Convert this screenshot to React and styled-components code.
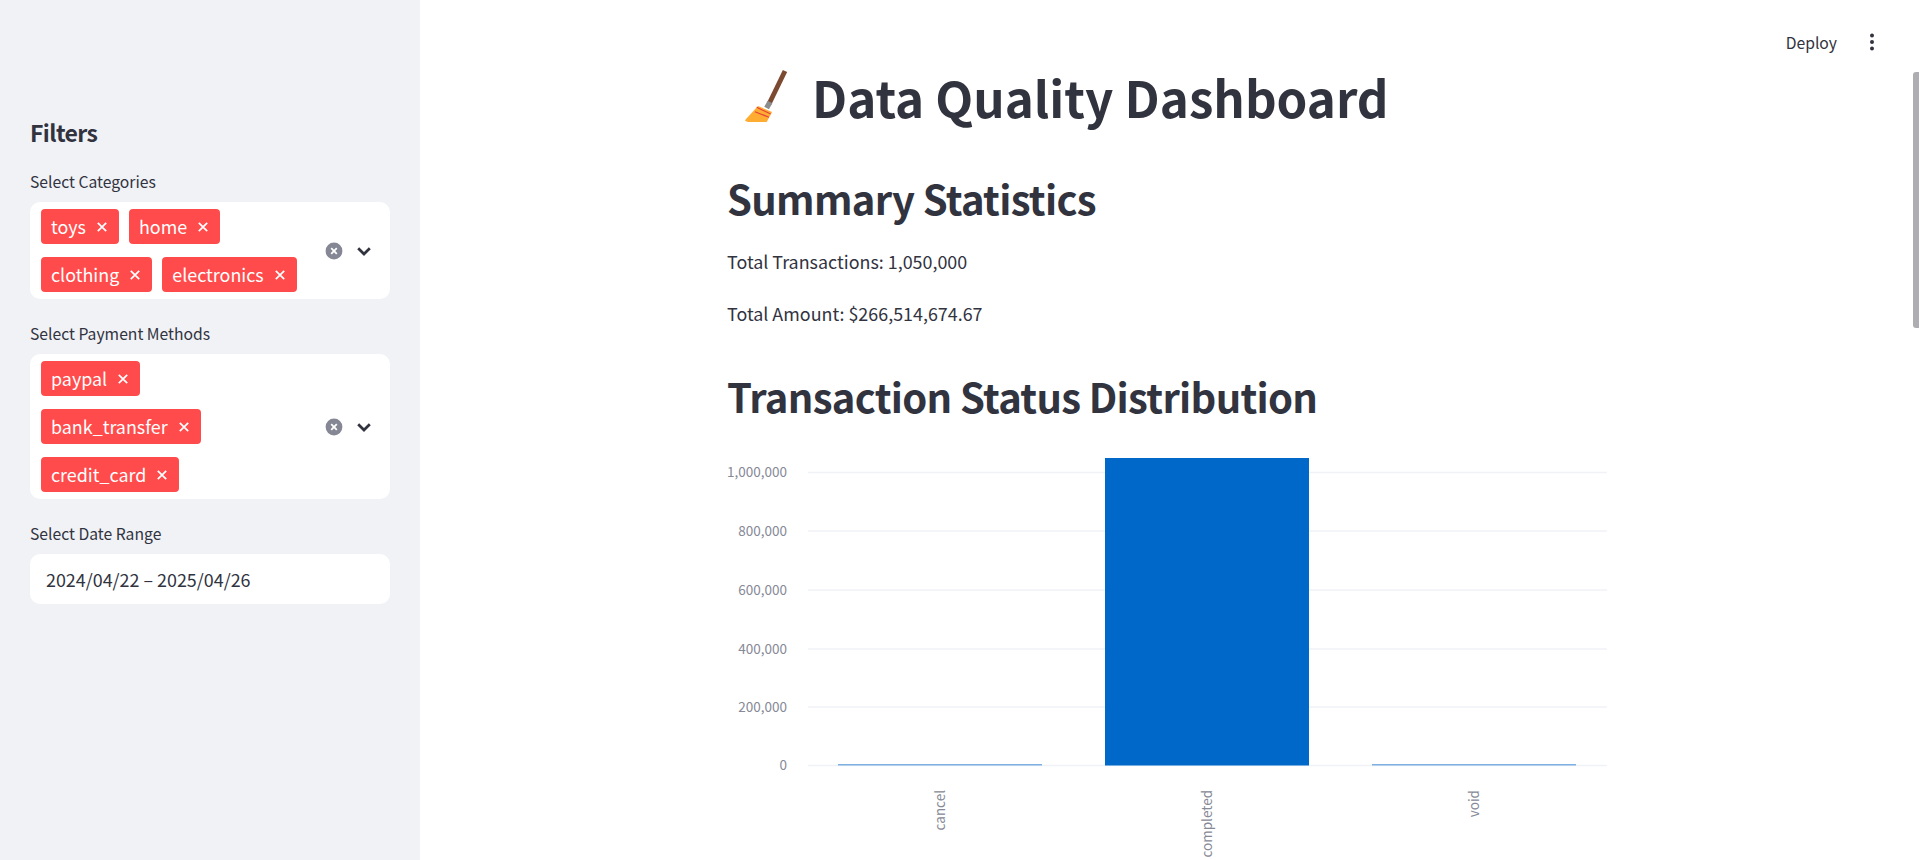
import React from "react";
import styled, { createGlobalStyle } from "styled-components";

const GlobalStyle = createGlobalStyle`
  html, body {
    margin: 0;
    padding: 0;
    height: 100%;
    overflow: hidden;
    background: #fff;
  }
  body {
    font-family: "Noto Sans CJK SC", "Noto Sans", sans-serif;
    color: #31333f;
  }
`;

const Page = styled.div`
  display: flex;
  height: 860px;
  overflow: hidden;
`;

const Sidebar = styled.aside`
  flex: 0 0 420px;
  box-sizing: border-box;
  background: #f0f2f6;
  padding: 116px 30px 0;
`;

const SidebarTitle = styled.h3`
  margin: 0 0 24px;
  font-size: 23px;
  letter-spacing: -0.6px;
  line-height: 32px;
  font-weight: 600;
`;

const Field = styled.div`
  margin-bottom: 25px;
`;

const FieldLabel = styled.label`
  display: block;
  font-size: 15.7px;
  line-height: 20px;
  margin-bottom: 10px;
`;

const MultiBox = styled.div`
  display: flex;
  align-items: center;
  background: #fff;
  border-radius: 10px;
  padding: 7px 10px 7px 11px;
`;

const TagList = styled.div`
  flex: 1;
  display: flex;
  flex-direction: column;
  row-gap: 13px;
`;

const TagRow = styled.div`
  display: flex;
  column-gap: 10px;
`;

const Tag = styled.span`
  display: inline-flex;
  align-items: center;
  box-sizing: border-box;
  height: 35px;
  padding: 0 12px 2px 10px;
  gap: 11px;
  border-radius: 4px;
  background: #ff4b4b;
  color: #fff;
  font-size: 17.9px;
  line-height: 20px;

  svg {
    margin-top: 2px;
  }
`;

const BoxControls = styled.div`
  display: flex;
  align-items: center;
  gap: 12px;
  padding-right: 7px;
`;

const DateBox = styled.div`
  height: 50px;
  box-sizing: border-box;
  padding: 0 16px;
  display: flex;
  align-items: center;
  background: #fff;
  border-radius: 10px;
  font-size: 17.9px;
`;

const Main = styled.main`
  position: relative;
  flex: 1;
  min-width: 0;
  display: flex;
  flex-direction: column;
`;

const Toolbar = styled.header`
  flex: 0 0 auto;
  box-sizing: border-box;
  height: 64px;
  padding: 20px 44px 0 0;
  display: flex;
  justify-content: flex-end;
  align-items: center;
  gap: 32px;
  font-size: 15.7px;
`;

const Content = styled.div`
  width: 885px;
  margin-left: 307px;
`;

const Title = styled.h1`
  margin: 0 0 40px;
  display: flex;
  align-items: center;
  gap: 19px;
  padding-left: 16px;
  font-size: 49.3px;
  line-height: 66px;
  font-weight: 700;
`;

const Heading = styled.h2`
  margin: ${(p) => (p.$spaced ? "40px" : "0")} 0 20px;
  font-size: 40px;
  letter-spacing: -0.7px;
  line-height: 56px;
  font-weight: 600;
`;

const Para = styled.p`
  margin: 0 0 22px;
  font-size: 17.9px;
  line-height: 30px;
`;

const ChartFrame = styled.svg`
  display: block;
`;

const AxisText = styled.text`
  font-size: 13.5px;
  fill: #868996;
`;

const Scrollbar = styled.div`
  position: absolute;
  top: 72px;
  right: 0;
  width: 6px;
  height: 256px;
  border-radius: 3px 0 0 3px;
  background: #aeaeb2;
`;

const TagClose = () => (
  <svg width="10" height="10" viewBox="0 0 10 10">
    <path d="M.8.8l8.4 8.4M9.2.8L.8 9.2" stroke="#fff" strokeWidth="1.7" fill="none" />
  </svg>
);

const ClearIcon = () => (
  <svg width="18" height="18" viewBox="0 0 18 18">
    <circle cx="9" cy="9" r="8.4" fill="#858794" />
    <path d="M6.2 6.2l5.6 5.6M11.8 6.2l-5.6 5.6" stroke="#fff" strokeWidth="1.8" fill="none" />
  </svg>
);

const Chevron = () => (
  <svg width="18" height="18" viewBox="0 0 18 18">
    <path d="M3.2 6.2L9 12l5.8-5.8" stroke="#31333f" strokeWidth="2.7" fill="none" />
  </svg>
);

const DotsIcon = () => (
  <svg width="6" height="18" viewBox="0 0 6 18">
    <circle cx="3" cy="2.6" r="2" fill="#31333f" />
    <circle cx="3" cy="9" r="2" fill="#31333f" />
    <circle cx="3" cy="15.4" r="2" fill="#31333f" />
  </svg>
);

const Broom = () => (
  <svg width="50" height="56" viewBox="0 0 50 56">
    <path d="M42 2L26 35" stroke="#7b4a31" strokeWidth="4.8" fill="none" />
    <path d="M27 33l-3.4 6" stroke="#8d8d8d" strokeWidth="5.4" fill="none" />
    <path d="M15 37l14 6-5 9.4q-.4.6-1 .6H5q-3.6-.6-2.4-2.6z" fill="#ffac33" />
    <path d="M13.7 38.3L27.7 45M12 42.7l14 5.6" stroke="#e8413a" strokeWidth="1.2" fill="none" />
  </svg>
);

function MultiSelect({ label, rows }) {
  return (
    <Field>
      <FieldLabel>{label}</FieldLabel>
      <MultiBox>
        <TagList>
          {rows.map((row, i) => (
            <TagRow key={i}>
              {row.map((t) => (
                <Tag key={t}>
                  {t}
                  <TagClose />
                </Tag>
              ))}
            </TagRow>
          ))}
        </TagList>
        <BoxControls>
          <ClearIcon />
          <Chevron />
        </BoxControls>
      </MultiBox>
    </Field>
  );
}

const yTicks = [
  ["1,000,000", 472.5],
  ["800,000", 531],
  ["600,000", 590],
  ["400,000", 649],
  ["200,000", 707],
  ["0", 765.5],
];

const bars = [
  { name: "cancel", x: 838, w: 204, top: 764 },
  { name: "completed", x: 1105, w: 204, top: 458 },
  { name: "void", x: 1372, w: 204, top: 764 },
];

// chart drawn in page coordinates, so the viewBox starts at the svg's own corner
const CHART_X = 727;
const CHART_Y = 444;

function StatusChart() {
  return (
    <ChartFrame width="885" height="416" viewBox={`${CHART_X} ${CHART_Y} 885 416`}>
      {yTicks.map(([label, y]) => (
        <g key={label}>
          <line x1="808" x2="1607" y1={y} y2={y} stroke="#f0f2f6" strokeWidth="1.5" />
          <AxisText x="787" y={y + 4.5} textAnchor="end">
            {label}
          </AxisText>
        </g>
      ))}
      {bars.map((b) => (
        <g key={b.name}>
          <rect x={b.x} y={b.top} width={b.w} height={765.5 - b.top} fill={b.top > 700 ? "#7fb0e2" : "#0068c9"} />
          <AxisText
            transform={`translate(${b.x + b.w / 2 + 5} 790) rotate(-90)`}
            textAnchor="end"
          >
            {b.name}
          </AxisText>
        </g>
      ))}
    </ChartFrame>
  );
}

export default function App() {
  return (
    <Page>
      <GlobalStyle />
      <Sidebar>
        <SidebarTitle>Filters</SidebarTitle>
        <MultiSelect
          label="Select Categories"
          rows={[
            ["toys", "home"],
            ["clothing", "electronics"],
          ]}
        />
        <MultiSelect
          label="Select Payment Methods"
          rows={[["paypal"], ["bank_transfer"], ["credit_card"]]}
        />
        <Field>
          <FieldLabel>Select Date Range</FieldLabel>
          <DateBox>2024/04/22 – 2025/04/26</DateBox>
        </Field>
      </Sidebar>
      <Main>
        <Toolbar>
          <span>Deploy</span>
          <DotsIcon />
        </Toolbar>
        <Content>
          <Title>
            <Broom />
            Data Quality Dashboard
          </Title>
          <Heading>Summary Statistics</Heading>
          <Para>Total Transactions: 1,050,000</Para>
          <Para>Total Amount: $266,514,674.67</Para>
          <Heading $spaced>Transaction Status Distribution</Heading>
          <StatusChart />
        </Content>
        <Scrollbar />
      </Main>
    </Page>
  );
}
